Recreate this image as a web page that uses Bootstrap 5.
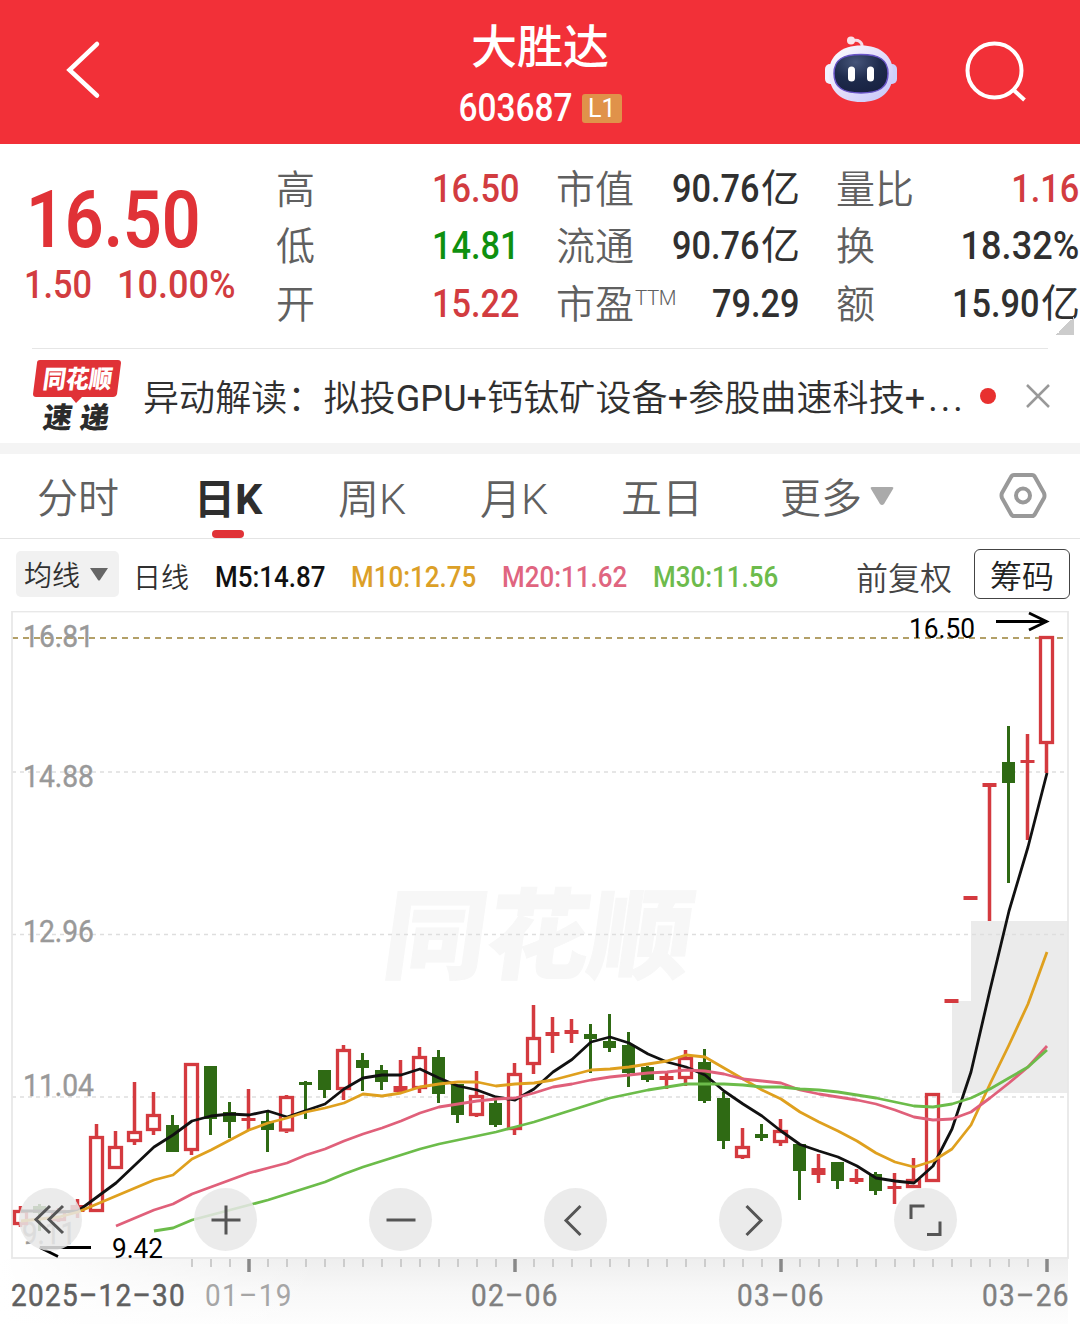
<!DOCTYPE html>
<html lang="zh-CN">
<head>
<meta charset="utf-8">
<meta name="viewport" content="width=device-width, initial-scale=1">
<title>大胜达 603687</title>
<link href="https://cdn.jsdelivr.net/npm/bootstrap@5.3.0/dist/css/bootstrap.min.css" rel="stylesheet">
<style>
  body { width: 1080px; height: 1324px; overflow: hidden; background: #fff; color: #303030;
    font-family: Roboto, "Noto Sans CJK SC", sans-serif; line-height: 1; }
  .topbar { height: 144px; background: #f23038; }
  .side { width: 300px; height: 144px; }
  .stock-name { font-size: 46px; font-weight: 500; line-height: 50px; padding-top: 22px; }
  .stock-code { height: 30px; margin: 21px 15px 0 0; font-size: 38px; font-weight: 500; }
  .level { width: 40px; height: 29px; margin-left: 9px; background: #e0924a; border-radius: 3px; font-size: 25px; font-weight: 400; line-height: 30px; }
  .dg { display: inline-block; transform: scaleX(.88); transform-origin: right center; white-space: nowrap; }
  .dg-l { transform-origin: left center; }
  .dg-w { transform: scaleX(.925); }
  .quote { height: 204px; }
  .price-col { width: 277px; padding: 36px 0 0 24px; color: #e03237; }
  .price { font-size: 80px; font-weight: 600; line-height: 80px; height: 80px; padding-left: 2px; }
  .price .dg { transform: scaleX(.85); }
  .change { font-size: 39px; height: 50px; line-height: 50px; font-weight: 500; color: #d23c40; }
  .figs { width: 242px; margin-right: 38px; padding-top: 16.5px; }
  .figs > div { height: 57.5px; font-size: 39px; white-space: nowrap; }
  .figs .lbl { color: #606060; font-weight: 350; margin-left: -1px; padding-top: 2px; }
  .figs .val { font-weight: 500; }
  .figs .val .han { font-weight: 400; position: relative; left: 1px; }
  .up { color: #d23c40; } .down { color: #0f900f; }
  .ttm { font-size: 20.5px; font-weight: 300; position: relative; top: -13px; left: 1px; letter-spacing: -.5px; }
  .fold { right: 6px; bottom: 13px; width: 18px; height: 18px; background: linear-gradient(135deg, transparent 50%, #ccc 50%); }
  .rule { height: 1px; margin: 0 32px; background: #e6e6e6; }
  .news { height: 94px; padding: 0 29px 0 32px; font-size: 36px; color: #303030; }
  .headline { width: 822px; margin-left: 21px; padding-top: 5px; font-weight: 350; }
  .headline .plus { letter-spacing: .1px; }
  .headline .en { font-weight: 400; }
  .headline .dots { letter-spacing: 3px; margin-left: 3px; font-weight: 400; }
  .reddot { width: 16px; height: 16px; margin-left: 15px; background: #e8302f; }
  .strip { height: 11px; background: #f4f4f4; }
  .ktabs { height: 85px; border-bottom: 1px solid #e4e4e4; font-size: 41px; color: #606060; font-weight: 350; padding-left: 37px; }
  .ktabs > div { line-height: 91px; white-space: nowrap; }
  .ktabs .en { font-size: 43px; font-weight: 350; }
  .ktabs .active, .ktabs .active .en { color: #2e2e2e; font-weight: 700; }
  .ktabs .active > span { position: relative; left: -2px; }
  .bar-on { left: 16px; bottom: 0; width: 32px; height: 8px; border-radius: 4px; background: #e03237; }
  .ma-row { height: 72px; padding: 0 10px 2px 16px; font-size: 29px; }
  .ma-row .ma { font-weight: 500; padding: 7px 0 0 14px; }
  .ma-row .ma .dg { transform: scaleX(.895); }
  .ma-pick { width: 103px; height: 46px; background: #f1f1f1; border-radius: 5px; padding: 6px 0 0 8px; font-size: 28px; font-weight: 350; }
  .chip-btn { width: 96px; height: 50px; border: 1.5px solid #444; border-radius: 6px; font-size: 32px; color: #222; padding-top: 5px; font-weight: 350; }
  .chart { height: 713px; }
  .chart svg { display: block; }
  .tools { left: 19px; top: 577px; width: 938px; }
  .tool { width: 63px; height: 63px; background: rgba(232,232,232,.85); border-radius: 50%; }
  .tool svg { position: relative; left: -.5px; }
</style>
<script src="https://cdn.jsdelivr.net/npm/bootstrap@5.3.0/dist/js/bootstrap.bundle.min.js"></script>
</head>
<body>
<header class="topbar d-flex justify-content-between text-white">
  <div class="side">
    <svg width="144" height="144" fill="none" stroke="#fff" stroke-width="4.5" stroke-linecap="round"><path d="M97 44 69.500 70 97 95.500"/></svg>
  </div>
  <div class="text-center">
    <div class="stock-name">大胜达</div>
    <div class="stock-code d-flex justify-content-center align-items-center"><span class="dg">603687</span><span class="level">L1</span></div>
  </div>
  <div class="side">
    <svg width="300" height="144" viewBox="780 0 300 144" fill="none">
      <defs>
        <linearGradient id="shell" x1="0" y1="0" x2="1" y2="1"><stop offset="0" stop-color="#fff"/><stop offset=".5" stop-color="#e3defa"/><stop offset="1" stop-color="#c3c5fa"/></linearGradient>
        <radialGradient id="visor" cx=".4" cy=".2" r=".9"><stop offset="0" stop-color="#46557a"/><stop offset=".5" stop-color="#1e2b4c"/><stop offset="1" stop-color="#17203f"/></radialGradient>
      </defs>
      <path d="M852 41c6-2 11 1 10 7" stroke="#f5dce8" stroke-width="3"/>
      <circle cx="851" cy="40.500" r="4" fill="#fbe3ea"/>
      <rect x="825" y="64" width="11" height="20" rx="5" fill="#f3f1ff"/><rect x="886" y="64" width="11" height="20" rx="5" fill="#cdd0fb"/>
      <path d="M861 45.500c19 0 32 10 32 27 0 20-13 29.500-32 29.500s-32-9.500-32-29.500c0-17 13-27 32-27z" fill="url(#shell)"/>
      <path d="M861 54.500c18 0 27 5 27 19s-9 19.500-27 19.500-27-5.500-27-19.500 9-19 27-19z" fill="url(#visor)" stroke="#6a55c8" stroke-width="1.500"/>
      <rect x="848" y="66.500" width="7" height="15" rx="3.500" fill="#fff"/><rect x="867" y="66.500" width="7" height="15" rx="3.500" fill="#fff"/>
      <circle cx="994.500" cy="70.500" r="27" stroke="#fff" stroke-width="4"/><path d="M1013 89.500 1024.500 100" stroke="#fff" stroke-width="4"/>
    </svg>
  </div>
</header>

<section class="quote d-flex position-relative">
  <div class="price-col flex-shrink-0">
    <div class="price"><span class="dg dg-l">16.50</span></div>
    <div class="change d-flex"><span class="dg dg-l" style="width:93px">1.50</span><span class="dg dg-l dg-w">10.00%</span></div>
  </div>
  <div class="figs flex-shrink-0">
    <div class="d-flex justify-content-between align-items-center"><span class="lbl">高</span><span class="val up"><span class="dg">16.50</span></span></div>
    <div class="d-flex justify-content-between align-items-center"><span class="lbl">低</span><span class="val down"><span class="dg">14.81</span></span></div>
    <div class="d-flex justify-content-between align-items-center"><span class="lbl">开</span><span class="val up"><span class="dg">15.22</span></span></div>
  </div>
  <div class="figs flex-shrink-0">
    <div class="d-flex justify-content-between align-items-center"><span class="lbl">市值</span><span class="val"><span class="dg">90.76</span><span class="han">亿</span></span></div>
    <div class="d-flex justify-content-between align-items-center"><span class="lbl">流通</span><span class="val"><span class="dg">90.76</span><span class="han">亿</span></span></div>
    <div class="d-flex justify-content-between align-items-center"><span class="lbl">市盈<span class="ttm">TTM</span></span><span class="val"><span class="dg">79.29</span></span></div>
  </div>
  <div class="figs flex-shrink-0 me-0">
    <div class="d-flex justify-content-between align-items-center"><span class="lbl">量比</span><span class="val up"><span class="dg">1.16</span></span></div>
    <div class="d-flex justify-content-between align-items-center"><span class="lbl">换</span><span class="val"><span class="dg dg-w">18.32%</span></span></div>
    <div class="d-flex justify-content-between align-items-center"><span class="lbl">额</span><span class="val"><span class="dg">15.90</span><span class="han">亿</span></span></div>
  </div>
  <i class="fold position-absolute"></i>
</section>
<div class="rule"></div>

<section class="news d-flex align-items-center">
  <svg class="flex-shrink-0" width="90" height="78" viewBox="32 356 90 78" font-family="Noto Sans CJK SC" font-weight="900">
    <path d="M40 359h78q3 0 3 3l-4 31q-1 3-4 3H82l-6 6-5-6H36q-3 0-3-3l4-31q0-3 3-3z" fill="#e03237"/>
    <text transform="translate(42 387) skewX(-8)" font-size="25" fill="#fff" textLength="69" lengthAdjust="spacingAndGlyphs">同花顺</text>
    <text transform="translate(42 427) skewX(-8)" font-size="29" fill="#2b2b2b" textLength="66" lengthAdjust="spacing">速递</text>
  </svg>
  <div class="headline text-nowrap flex-shrink-0"><span class="plus">异动解读：拟投<span class="en">GPU+</span>钙钛矿设备<span class="en">+</span>参股曲速科技<span class="en">+</span></span><span class="dots">...</span></div>
  <span class="reddot rounded-circle flex-shrink-0"></span>
  <svg class="ms-auto flex-shrink-0" width="26" height="26" stroke="#999" stroke-width="2.500"><path d="M2 2 24 24M24 2 2 24"/></svg>
</section>
<div class="strip"></div>

<nav class="ktabs d-flex">
  <div style="width:159px">分时</div>
  <div class="active position-relative" style="width:142px"><span>日<span class="en">K</span></span><i class="bar-on position-absolute"></i></div>
  <div style="width:142px">周<span class="en">K</span></div>
  <div style="width:141px">月<span class="en">K</span></div>
  <div style="width:159px">五日</div>
  <div class="d-flex" style="width:218px">更多<svg width="24" height="20" style="margin:32px 0 0 8px"><path d="M2 1h20q2 0 1 2L14 18q-2 2-4 0L1 3q-1-2 1-2z" fill="#aaa"/></svg></div>
  <div class="d-flex align-items-center"><svg width="50" height="48" fill="none" stroke="#999" stroke-width="4"><path d="M16 3h18q2 0 3 2l9 16q1 3 0 5l-9 16q-1 2-3 2H16q-2 0-3-2L4 26q-1-3 0-5l9-16q1-2 3-2z"/><circle cx="25" cy="23.500" r="7"/></svg></div>
</nav>

<section class="ma-row d-flex align-items-center">
  <div class="ma-pick d-flex align-items-center">均线<svg width="20" height="15" style="margin:-6px 0 0 9px"><path d="M1 1h18L11 13q-1 1-2 0z" fill="#666"/></svg></div>
  <div style="width:82px;padding:9px 0 0 14px;font-size:28px;font-weight:350;white-space:nowrap">日线</div>
  <div class="ma" style="width:136px;color:#111"><span class="dg dg-l">M5:14.87</span></div>
  <div class="ma" style="width:151px;color:#dca027"><span class="dg dg-l">M10:12.75</span></div>
  <div class="ma" style="width:151px;color:#e06580"><span class="dg dg-l">M20:11.62</span></div>
  <div class="ma" style="width:151px;color:#6dbb4c"><span class="dg dg-l">M30:11.56</span></div>
  <div class="ms-auto" style="font-size:32px;color:#444;margin-right:22px;padding-top:10px;font-weight:350">前复权</div>
  <div class="chip-btn d-flex align-items-center justify-content-center">筹码</div>
</section>

<section class="chart position-relative">
  <svg width="1080" height="713" viewBox="0 611 1080 713" font-family="Roboto" fill="none">
    <defs>
      <linearGradient id="axisBg" x1="0" y1="0" x2="0" y2="1"><stop offset="0" stop-color="#eee"/><stop offset=".5" stop-color="#f8f8f8"/><stop offset="1" stop-color="#fdfdfd"/></linearGradient>
      <linearGradient id="axisFade"><stop offset="0" stop-color="#fff"/><stop offset="1" stop-color="#fff" stop-opacity="0"/></linearGradient>
    </defs>
    <rect x="0" y="1259" width="1068" height="65" fill="url(#axisBg)"/>
    <rect x="0" y="1259" width="320" height="65" fill="url(#axisFade)"/>
    <text transform="translate(380 971) skewX(-8)" font-family="Noto Sans CJK SC" font-weight="900" font-size="98" fill="#f7f7f7" stroke="#f7f7f7" stroke-width="1" textLength="308" lengthAdjust="spacingAndGlyphs">同花顺</text>
    <path d="M971 921H1068V1093H952V1001H971Z" fill="#ebebeb"/>
    <path d="M12 772H1068M12 934.500H1068M12 1097H1068" stroke="#dedede" stroke-width="1.300" stroke-dasharray="4 4"/>
    <path d="M12 638H1068" stroke="#b3a068" stroke-width="1.800" stroke-dasharray="6 5"/>
    <rect x="12" y="611.500" width="1056" height="646.500" stroke="#e8e8e8" stroke-width="1.800"/>
    <g font-size="31" font-weight="400" fill="#999" stroke="#999" stroke-width=".4">
      <text x="23" y="647" textLength="71" lengthAdjust="spacingAndGlyphs">16.81</text>
      <text x="23" y="787" textLength="71" lengthAdjust="spacingAndGlyphs">14.88</text>
      <text x="23" y="942" textLength="71" lengthAdjust="spacingAndGlyphs">12.96</text>
      <text x="23" y="1096" textLength="71" lengthAdjust="spacingAndGlyphs">11.04</text>
      <text x="22" y="1244" textLength="54" lengthAdjust="spacingAndGlyphs">9.11</text>
    </g>
    <g id="candles"></g>
    <g id="averages" stroke-width="2.800" stroke-linejoin="round"></g>
    <g font-size="27" fill="#000">
      <text x="909" y="638" textLength="66" lengthAdjust="spacingAndGlyphs">16.50</text>
      <text x="112" y="1258" textLength="51" lengthAdjust="spacingAndGlyphs">9.42</text>
    </g>
    <path d="M996 621.500H1046M1029 613 1046.500 621.500 1029 630M91 1247.500H40L58 1256.500" stroke="#000" stroke-width="2.800"/>
    <g id="ticks"></g>
    <g font-size="31" font-weight="400" fill="#808080">
      <text transform="translate(11 1306) scale(.9 1)" fill="#606060" stroke="#606060" stroke-width=".5" textLength="193" lengthAdjust="spacing">2025–12–30</text>
      <text transform="translate(205 1306) scale(.9 1)" fill="#a6a6a6" textLength="96" lengthAdjust="spacing">01–19</text>
      <text transform="translate(471 1306) scale(.9 1)" stroke="#808080" stroke-width=".4" textLength="96" lengthAdjust="spacing">02–06</text>
      <text transform="translate(737 1306) scale(.9 1)" stroke="#808080" stroke-width=".4" textLength="96" lengthAdjust="spacing">03–06</text>
      <text transform="translate(982 1306) scale(.9 1)" stroke="#808080" stroke-width=".4" textLength="96" lengthAdjust="spacing">03–26</text>
    </g>
  </svg>
  <div class="tools position-absolute d-flex justify-content-between">
    <div class="tool"><svg width="63" height="63" fill="none" stroke="#555" stroke-width="3"><path d="M31 18 17 31.500 31 45M44 18 30 31.500 44 45"/></svg></div>
    <div class="tool"><svg width="63" height="63" fill="none" stroke="#555" stroke-width="3"><path d="M17.500 32H46.500M32 17.500V46.500"/></svg></div>
    <div class="tool"><svg width="63" height="63" fill="none" stroke="#555" stroke-width="3"><path d="M17.500 32H46.500"/></svg></div>
    <div class="tool"><svg width="63" height="63" fill="none" stroke="#555" stroke-width="3"><path d="M36.500 18 22 32.500 36.500 47"/></svg></div>
    <div class="tool"><svg width="63" height="63" fill="none" stroke="#555" stroke-width="3"><path d="M27.500 18 42 32.500 27.500 47"/></svg></div>
    <div class="tool"><svg width="63" height="63" fill="none" stroke="#555" stroke-width="3"><path d="M17 31V18H30.500M46 33.500V46.500H33"/></svg></div>
  </div>
</section>
<script>
  // One row per trading day: direction, body top, body bottom, high, low
  const days = [
    ['r',1210,1225,1206,1227],['g',1206,1213,1204,1231],['r',1210,1221,1208,1222],['r',1205,1212,1199,1218],
    ['r',1136,1212,1124,1212],['r',1146,1169,1131,1169],['r',1131,1142,1082,1145],['r',1114,1131,1092,1135],
    ['g',1125,1152,1115,1152],['r',1063,1151,1063,1155],['g',1066,1119,1066,1135],['g',1112,1122,1102,1138],
    ['r',1118,1121,1089,1131],['g',1121,1130,1112,1152],['r',1096,1131.5,1095,1133],['g',1082,1085,1081,1119],
    ['g',1070,1090,1070,1098],['r',1049,1090,1045,1100],['g',1060,1068,1053,1091],['g',1070,1082,1065,1090],
    ['r',1086,1092,1060,1092],['r',1056,1089,1047,1093],['g',1057,1094,1050,1103],['g',1084,1115,1084,1123],
    ['r',1095,1116,1071,1117],['g',1103,1125,1100,1127],['r',1073,1130,1063,1135],['r',1037,1065,1005,1074],
    ['r',1032,1036,1017,1053],['r',1030,1034,1019,1043],['g',1034,1039,1024,1073],['g',1041,1048,1014,1052],
    ['g',1045,1073,1032,1087],['g',1067,1080,1066,1082],['r',1076,1080,1073,1089],['r',1057,1079,1050,1086],
    ['g',1062,1101,1049,1103],['g',1098,1141,1092,1149],['r',1146,1158,1128,1159],['g',1134,1138,1124,1141],
    ['r',1130,1143,1119,1146],['g',1144,1171,1144,1200],['r',1168,1175,1154,1183],['g',1162,1181,1162,1189],
    ['r',1178,1182,1169,1184],['g',1174,1191,1172,1195],['r',1186,1189,1173,1204],['r',1179,1188,1158,1188],
    ['r',1093,1182,1093,1182],['r',999,1003,999,1003],['r',896,900,896,900],['r',783,787,783,921],
    ['g',762,783,726,883],['r',760,763,734,840],['r',636,744,636,773]];
  const xAt = i => 21 + 19 * i;
  let out = '';
  days.forEach(([dir, top, bottom, high, low], i) => {
    const x = xAt(i), h = bottom - top;
    if (dir === 'g') {
      out += `<path d="M${x - .5} ${high}V${low}" stroke="#2f6a14" stroke-width="3"/><rect x="${x - 7}" y="${top}" width="13" height="${h}" fill="#2f6a14"/>`;
    } else {
      out += `<path d="M${x - .5} ${high}V${top}M${x - .5} ${bottom}V${low}" stroke="#d43a3f" stroke-width="3.5"/>`;
      out += h > 7
        ? `<rect x="${x - 6.5}" y="${top + 1.5}" width="12" height="${h - 3}" stroke="#d43a3f" stroke-width="3.3"/>`
        : `<rect x="${x - 7.5}" y="${top}" width="14" height="${h}" fill="#d43a3f"/>`;
    }
  });
  document.getElementById('candles').innerHTML = out;

  // Moving averages: colour, index of the first day, level on each day
  const lines = [
    ['#111', 0, [1211,1211,1212,1211,1197,1183,1165,1147,1135,1121,1116,1114,1115,1111,1117,1110.5,1104,1089,1078,1075,1075,1069,1078,1086,1090,1097,1100,1089,1072,1059.5,1042,1037,1043,1054,1062,1067,1075,1091,1104,1116,1131,1144.5,1151,1157,1166,1178,1181,1183,1166,1129,1072,990,911,847,773]],
    ['#dfa01e', 0, [1221,1219,1217,1212,1204,1196,1188,1180,1175,1159,1150,1140,1130,1123,1118,1112,1108,1103,1094,1096,1093,1087,1084,1082,1082,1086,1084,1083,1080,1075,1070,1069,1067,1064,1061,1055,1057,1068,1079,1090,1099,1112,1122,1131,1141,1153,1162,1167,1161,1149,1125,1084,1045,1004,952]],
    ['#e0607a', 5, [1226,1218,1210,1204,1194,1187,1180,1173,1168,1163,1155,1149,1141,1134,1128,1121,1113,1107,1104,1101,1099,1098,1093,1087,1084,1080,1077,1075,1073,1072,1070,1071,1074,1079,1081,1083,1090,1094,1097,1100,1104,1110,1117,1120,1119,1112,1098,1083,1067,1046]],
    ['#6cbc4a', 7, [1231,1228,1220,1215,1210,1205,1200,1194,1188,1182,1174,1167,1161,1155,1149,1144,1140,1136,1132,1127,1122,1116,1110,1104,1098,1094,1090,1087,1084,1084,1084,1085,1087,1087,1089,1090,1092,1095,1098,1102,1106,1107,1104,1098,1089,1078,1067,1050]]];
  document.getElementById('averages').innerHTML = lines.map(([c, s, v]) =>
    `<polyline stroke="${c}" points="${v.map((y, i) => xAt(s + i) + ',' + y).join(' ')}"/>`).join('');

  // Date axis ticks, a long one every fourteen days
  let t = '';
  for (let i = 9; i <= 54; i++) {
    const major = (54 - i) % 14 === 0;
    t += `<path d="M${xAt(i)} 1259V${major ? 1272 : 1267}" stroke="${major ? '#888' : '#c8c8c8'}" stroke-width="${major ? 3.5 : 1.8}"/>`;
  }
  document.getElementById('ticks').innerHTML = t;
</script>
</body>
</html>
